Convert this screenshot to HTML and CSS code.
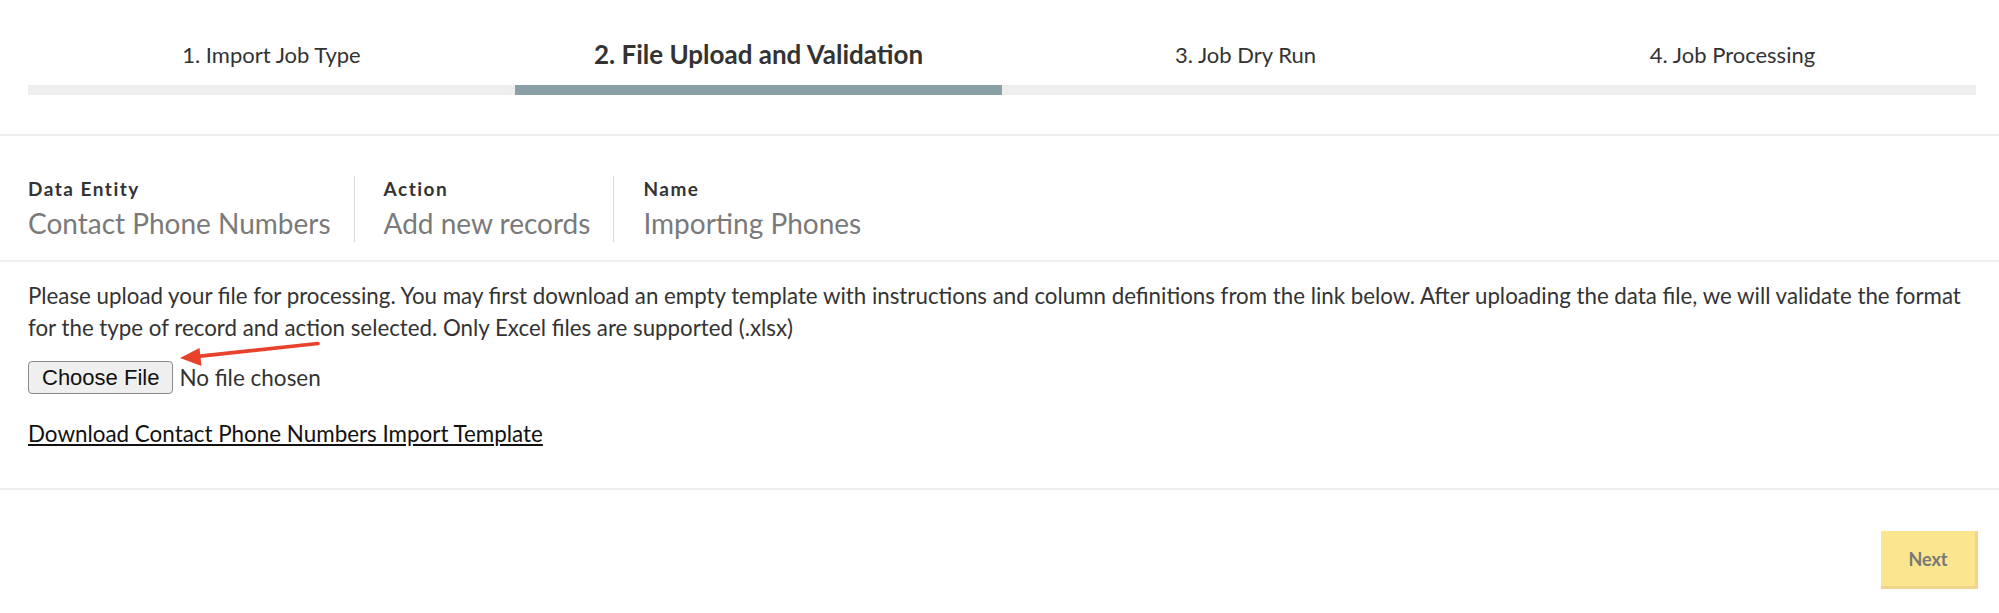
FILE: index.html
```html
<!DOCTYPE html>
<html lang="en">
<head>
<meta charset="utf-8">
<title>Import Job - File Upload and Validation</title>
<link rel="stylesheet" href="styles.css">
</head>
<body>
<div class="page">
  <header class="steps-section">
    <div class="steps">
      <div class="step">
        <div class="step-label">1. Import Job Type</div>
        <div class="step-bar"></div>
      </div>
      <div class="step active">
        <div class="step-label">2. File Upload and Validation</div>
        <div class="step-bar"></div>
      </div>
      <div class="step">
        <div class="step-label">3. Job Dry Run</div>
        <div class="step-bar"></div>
      </div>
      <div class="step">
        <div class="step-label">4. Job Processing</div>
        <div class="step-bar"></div>
      </div>
    </div>
  </header>

  <section class="summary">
    <div class="summary-item first">
      <div class="summary-label">Data Entity</div>
      <div class="summary-value">Contact Phone Numbers</div>
    </div>
    <div class="summary-item">
      <div class="summary-label">Action</div>
      <div class="summary-value">Add new records</div>
    </div>
    <div class="summary-item">
      <div class="summary-label">Name</div>
      <div class="summary-value">Importing Phones</div>
    </div>
  </section>

  <section class="upload">
    <p class="instructions">Please upload your file for processing. You may first download an empty template with instructions and column definitions from the link below. After uploading the data file, we will validate the format for the type of record and action selected. Only Excel files are supported (.xlsx)</p>
    <div class="file-row">
      <button class="choose-btn" type="button">Choose File</button>
      <span class="file-status">No file chosen</span>
      <svg class="arrow" width="160" height="35" viewBox="0 0 160 35" aria-hidden="true">
        <line x1="148" y1="4.5" x2="28" y2="17.4" stroke="#e8412c" stroke-width="3.6" stroke-linecap="round"/>
        <polygon points="10,19 29.5,9 31.5,27" fill="#e8412c"/>
      </svg>
    </div>
    <a class="template-link" href="#">Download Contact Phone Numbers Import Template</a>
  </section>

  <footer class="actions">
    <button class="next-btn" type="button">Next</button>
  </footer>
</div>
</body>
</html>
```

FILE: styles.css
```css
* { box-sizing: border-box; }

body {
  margin: 0;
  background: #ffffff;
  font-family: Lato, "Noto Sans", sans-serif;
  color: #333333;
}

.steps-section {
  padding: 25px 23px 39px 28px;
  border-bottom: 2px solid #efefef;
}

.steps {
  display: flex;
}

.step {
  flex: 1;
  display: flex;
  flex-direction: column;
}

.step-label {
  height: 60px;
  display: flex;
  align-items: center;
  justify-content: center;
  font-size: 22px;
  color: #333333;
  padding-bottom: 2px;
}

.step.active .step-label {
  font-size: 26px;
  font-weight: 700;
}

.step-bar {
  height: 10px;
  background: #eeeeee;
}

.step.active .step-bar {
  background: #88a0a6;
}

.summary {
  display: flex;
  padding: 40px 28px 18px;
  border-bottom: 2px solid #efefef;
}

.summary-item {
  display: flex;
  flex-direction: column;
  gap: 6px;
  padding: 2px 23px 0 29px;
  height: 66px;
  border-left: 1px solid #d8d8d8;
}

.summary-item.first {
  padding-left: 0;
  border-left: none;
}

.summary-label {
  font-size: 19px;
  line-height: 22px;
  font-weight: 700;
  letter-spacing: 1.5px;
  color: #333333;
}

.summary-value {
  font-size: 28px;
  line-height: 34px;
  color: #7a7a7a;
}

.upload {
  padding: 18px 23px 42px 28px;
  border-bottom: 2px solid #efefef;
}

.instructions {
  margin: 0;
  font-size: 22.3px;
  line-height: 32px;
  color: #333333;
}

.file-row {
  position: relative;
  display: flex;
  align-items: center;
  gap: 6px;
  margin-top: 17px;
  height: 33px;
}

.choose-btn {
  font-family: "Liberation Sans", Arial, sans-serif;
  font-size: 22px;
  color: #111111;
  height: 33px;
  padding: 0 13px;
  background: #efefef;
  border: 1px solid #8a8a8a;
  border-radius: 4px;
}

.file-status {
  font-size: 22.5px;
  color: #333333;
}

.arrow {
  position: absolute;
  left: 142px;
  top: -22px;
}

.template-link {
  display: inline-block;
  margin-top: 28px;
  font-size: 22.4px;
  line-height: 24px;
  color: #111111;
  text-decoration: underline;
}

.actions {
  display: flex;
  justify-content: flex-end;
  padding: 41px 21px 20px;
}

.next-btn {
  width: 97px;
  height: 58px;
  background: #f9e68f;
  border: none;
  border-right: 3px solid #f0d48c;
  border-bottom: 3px solid #f0d48c;
  font-family: Lato, "Noto Sans", sans-serif;
  font-size: 18px;
  font-weight: 700;
  color: #787878;
}
```
